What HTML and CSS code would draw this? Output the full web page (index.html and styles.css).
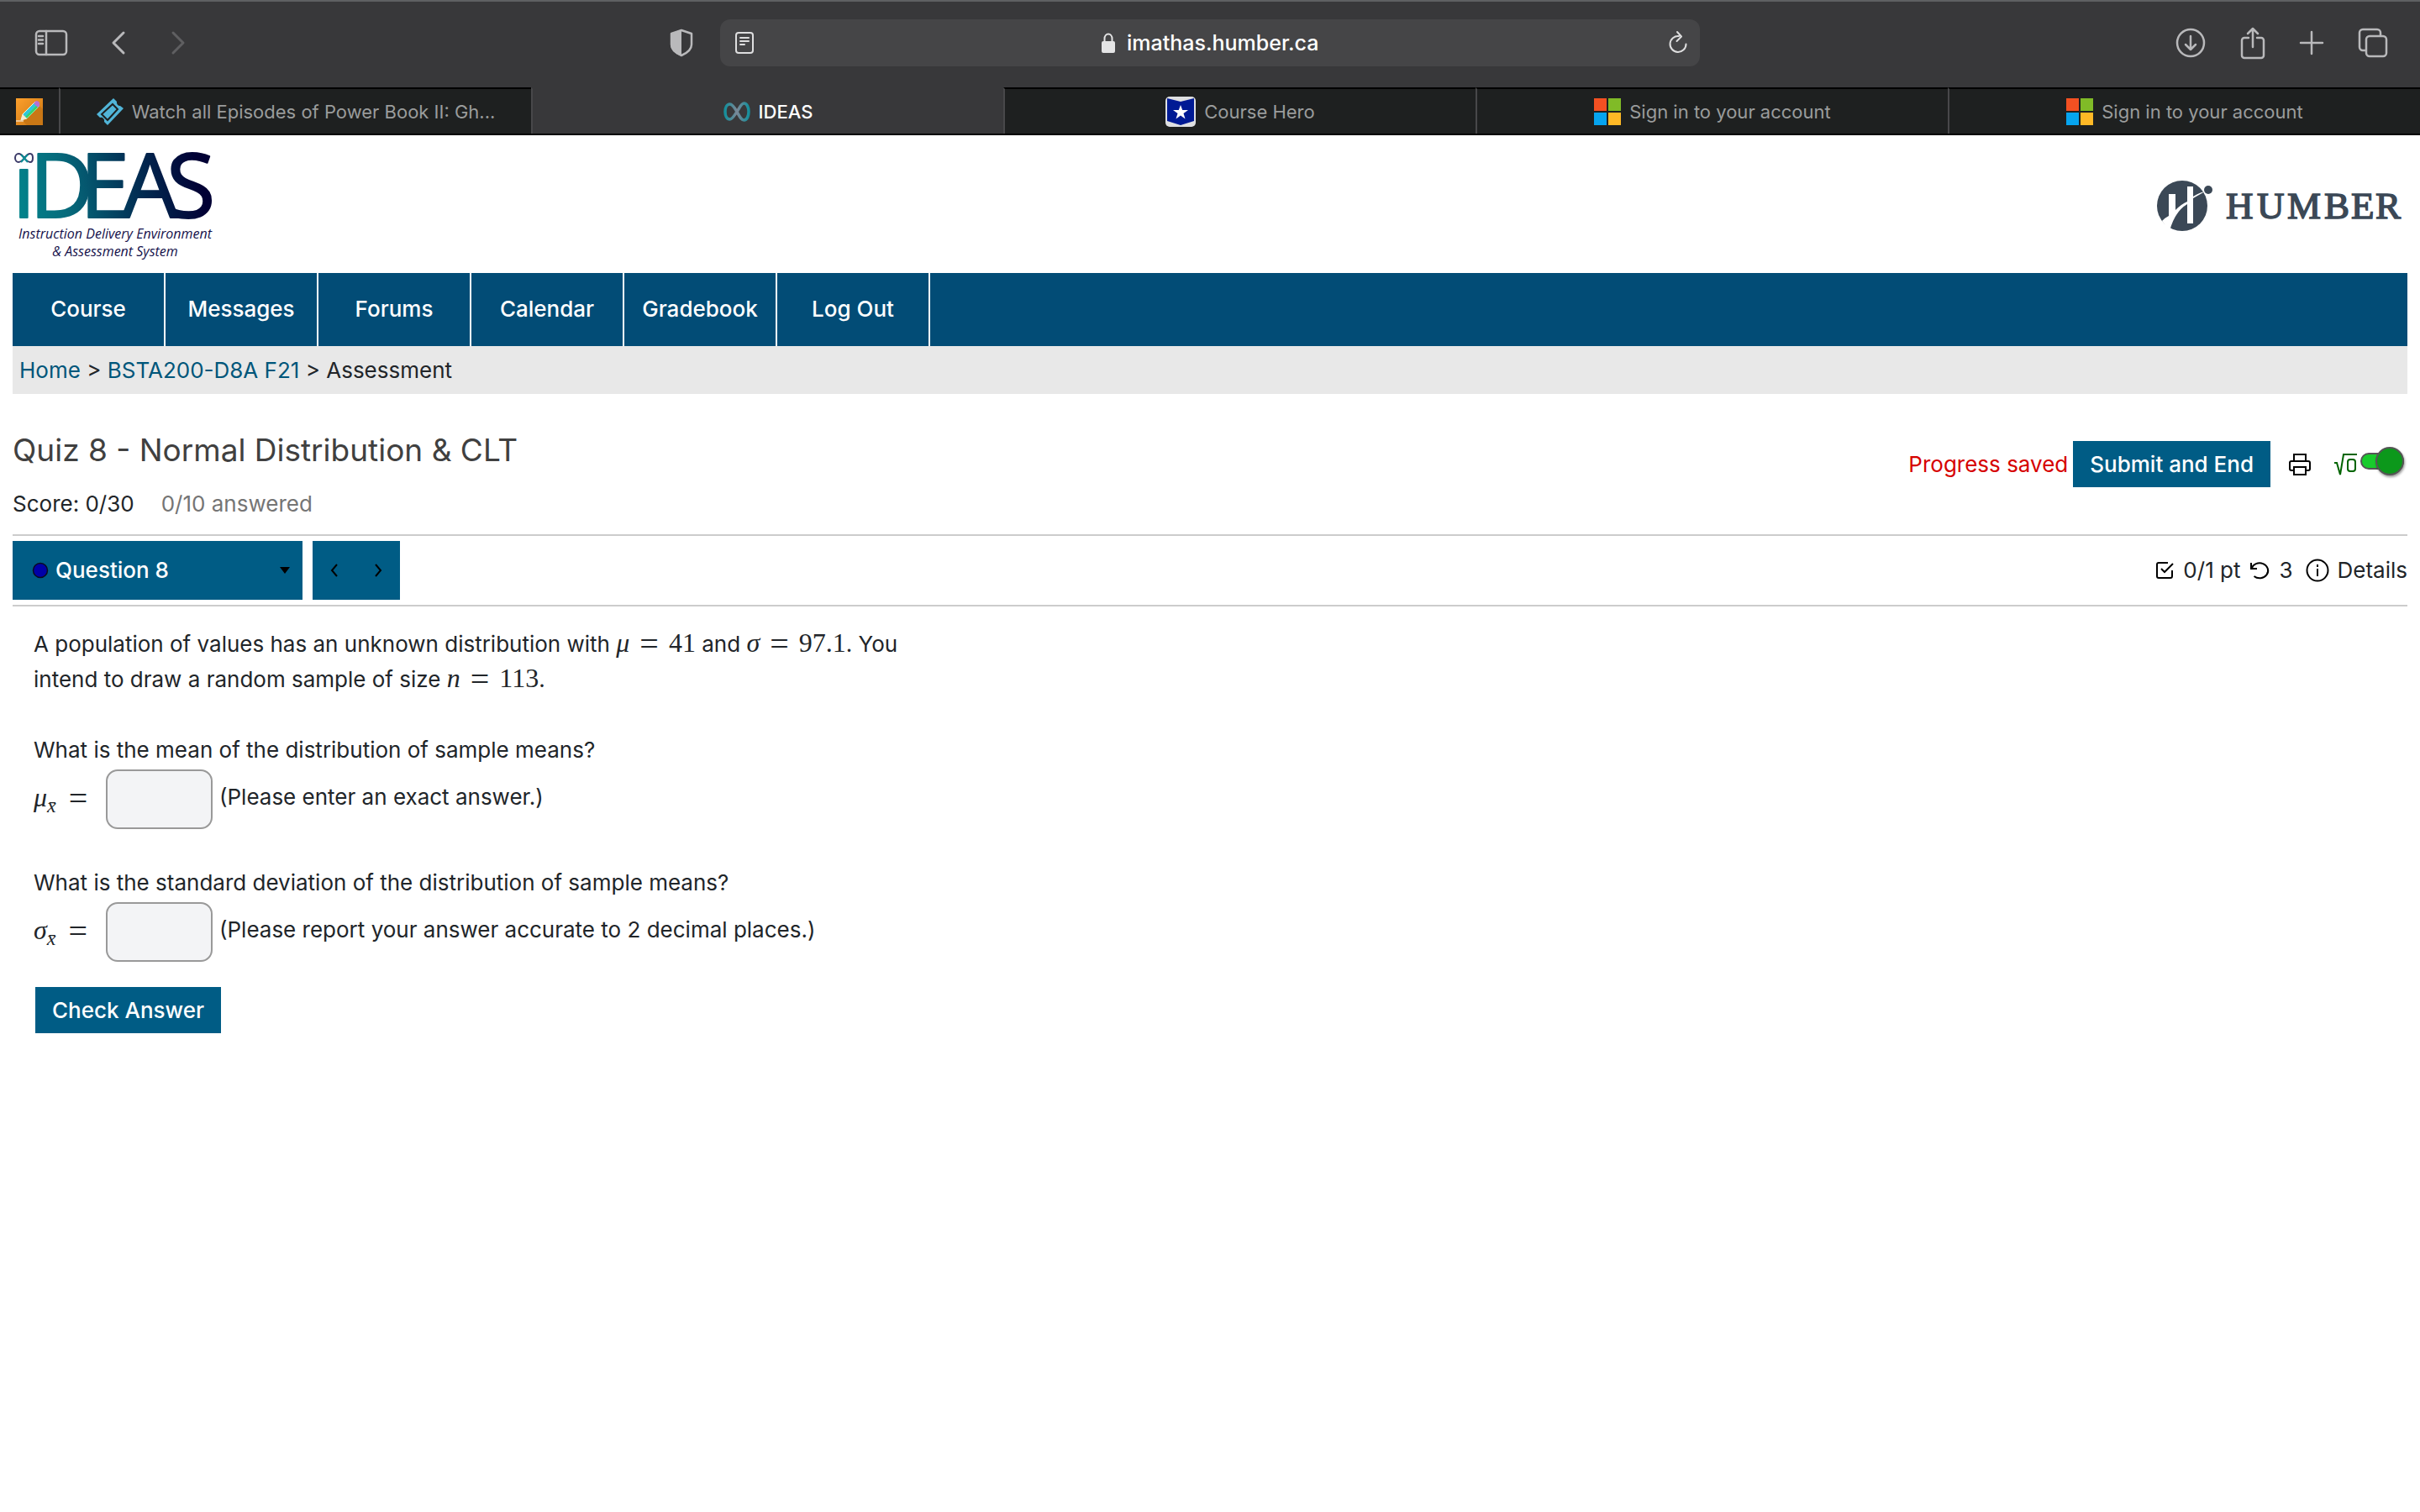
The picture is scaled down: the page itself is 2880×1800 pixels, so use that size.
FILE: index.html
```html
<!DOCTYPE html>
<html lang="en">
<head>
<meta charset="utf-8">
<title>IDEAS</title>
<link rel="stylesheet" href="styles.css">
</head>
<body>
<header class="browser">
  <div class="toolbar">
    <div class="tools tools-left">
      <button class="tool" aria-label="Show sidebar"><svg width="40" height="32" viewBox="0 0 40 32"><rect x="2" y="2" width="36" height="28" rx="4"/><path d="M14 2v28M5 8h5M5 12.500h5M5 17h5"/></svg></button>
      <button class="tool tool-back" aria-label="Back"><svg width="18" height="30" viewBox="0 0 18 30"><path d="M15 3 3 15l12 12" stroke-width="3"/></svg></button>
      <button class="tool tool-forward" aria-label="Forward"><svg width="18" height="30" viewBox="0 0 18 30"><path d="m3 3 12 12L3 27" stroke-width="3"/></svg></button>
      <button class="tool tool-shield" aria-label="Privacy report"><svg width="28" height="34" viewBox="0 0 28 34"><path d="M14 2 26 6v13c0 6-5 10-12 13C7 29 2 25 2 19V6z"/><path d="M14 1v32C6 30 1 25 1 19V6z" fill="currentColor" stroke="none"/></svg></button>
    </div>
    <form class="address">
      <button type="button" class="tool" aria-label="Reader"><svg width="22" height="26" viewBox="0 0 22 26"><rect x="1" y="1" width="20" height="24" rx="3"/><path d="M6 7h10M6 11h10M6 15h5"/></svg></button>
      <div class="site">
        <svg width="16" height="24" viewBox="0 0 16 24"><path d="M3.500 11V7a4.500 5.500 0 0 1 9 0v4" fill="none" stroke="#e4e4e5" stroke-width="2"/><rect y="10" width="16" height="14" rx="2" fill="#e4e4e5"/></svg>
        <input class="url" type="text" aria-label="Address" value="imathas.humber.ca">
      </div>
      <button type="button" class="tool" aria-label="Reload"><svg width="24" height="28" viewBox="0 0 24 28"><path d="M13 6a9.500 9.500 0 1 0 8.500 9.500M11 1l5 5.500-5.500 5.500"/></svg></button>
    </form>
    <div class="tools tools-right">
      <button class="tool" aria-label="Downloads"><svg width="36" height="36" viewBox="0 0 36 36"><circle cx="18" cy="18" r="16"/><path d="M18 10v16M12 20l6 6 6-6"/></svg></button>
      <button class="tool" aria-label="Share"><svg width="30" height="40" viewBox="0 0 30 40"><path d="M10 14H5a3 3 0 0 0-3 3v18a3 3 0 0 0 3 3h20a3 3 0 0 0 3-3V17a3 3 0 0 0-3-3h-5M15 25V3M9 9l6-6 6 6"/></svg></button>
      <button class="tool" aria-label="New tab"><svg width="28" height="28" viewBox="0 0 28 28"><path d="M14 1v26M1 14h26"/></svg></button>
      <button class="tool" aria-label="Show all tabs"><svg width="36" height="36" viewBox="0 0 36 36"><rect x="10" y="10" width="24" height="24" rx="4"/><path d="M9 27H6a4 4 0 0 1-4-4V6a4 4 0 0 1 4-4h17a4 4 0 0 1 4 4v3"/></svg></button>
    </div>
  </div>
  <nav class="tabs" aria-label="Tabs">
    <a class="tab tab-pinned" href="#" aria-label="Notes"><svg width="32" height="32" viewBox="0 0 32 32"><defs><linearGradient id="note" x2="1" y2="1"><stop stop-color="#fda02c"/><stop offset="1" stop-color="#c87413"/></linearGradient></defs><path fill="url(#note)" d="M0 0h32v32H0z"/><path d="M8 27 27 8l5 5v19H13z" fill="#c97715"/><path d="M0 27h9" stroke="#fff" stroke-width="1"/><path d="m6 26 2-7L23 4l5 5-15 15z" fill="#31c6d8" stroke="#e9f7e0"/><path d="m11 22 14-14 3 1-15 15z" fill="#38d26a"/><path d="m6 26 2-7 5 5z" fill="#fbe9cf"/><path d="m21 6 3-3q5 0 4 6l-2 2z" fill="#b76fd4"/></svg></a>
    <a class="tab" href="#"><svg width="32" height="32" viewBox="0 0 32 32"><path fill="#51b5d8" d="m20 0 4 4a4 4 0 0 0 4 5l4 3-19 20-4-4a4 4 0 0 0-5-5l-4-4z"/><path d="m19 7 6 6-12 13-7-7z" fill="none" stroke="#1e2020" stroke-width="2"/></svg><span>Watch all Episodes of Power Book II: Gh...</span></a>
    <a class="tab tab-active" href="#" aria-current="page"><svg width="32" height="24" viewBox="0 0 32 24"><defs><linearGradient id="loop"><stop stop-color="#158f9c"/><stop offset=".5" stop-color="#7b8796"/><stop offset="1" stop-color="#158f9c"/></linearGradient></defs><path d="M16 12C12 5 10 3 7.500 3 4 3 2 7 2 12s2 9 5.500 9c3 0 5-4 8.500-9s5-10 8.500-10C28 2 30 7 30 12s-2 10-5.500 10C21 22 19 17 16 12z" fill="none" stroke="url(#loop)" stroke-width="3.500"/></svg><span>IDEAS</span></a>
    <a class="tab" href="#"><svg width="36" height="36" viewBox="0 0 36 36"><rect width="36" height="36" rx="5" fill="#dfe0e2"/><path d="m2 2 16 4 16-4v27l-16 5-16-5z" fill="#001a94"/><path d="m18 10 2.200 6H27l-5.500 4 2 6.500-5.500-4-5.500 4 2-6.500L9 16h6.800z" fill="#fff"/></svg><span>Course Hero</span></a>
    <a class="tab" href="#"><svg width="32" height="32" viewBox="0 0 32 32"><path fill="#f35022" d="M0 0h15v15H0z"/><path fill="#80bb27" d="M17 0h15v15H17z"/><path fill="#06a4ef" d="M0 17h15v15H0z"/><path fill="#ffb926" d="M17 17h15v15H17z"/></svg><span>Sign in to your account</span></a>
    <a class="tab" href="#"><svg width="32" height="32" viewBox="0 0 32 32"><path fill="#f35022" d="M0 0h15v15H0z"/><path fill="#80bb27" d="M17 0h15v15H17z"/><path fill="#06a4ef" d="M0 17h15v15H0z"/><path fill="#ffb926" d="M17 17h15v15H17z"/></svg><span>Sign in to your account</span></a>
  </nav>
</header>

<div class="page">
  <header class="brand">
    <svg class="ideas" width="250" height="150" viewBox="0 0 250 150" role="img" aria-label="IDEAS">
      <defs><linearGradient id="ideas" gradientUnits="userSpaceOnUse" x1="10" y1="90" x2="225" y2="50"><stop stop-color="#02838b"/><stop offset=".25" stop-color="#066b7c"/><stop offset=".6" stop-color="#023558"/><stop offset="1" stop-color="#010034"/></linearGradient></defs>
      <text class="ideas-word" y="89" x="0 20 80 130 183" fill="url(#ideas)" stroke="url(#ideas)">ıDEAS</text>
      <path d="M14 18c-3-4-5-5-7-5s-4 2-4 5 2 5 4 5 4-1 7-5 5-5 7-5 3 2 3 5-1 5-3 5-4-1-7-5z" fill="none" stroke="#3b3a68" stroke-width="2"/><path d="m10 14 8 9M18 14l-8 9" stroke="#0c8c94" stroke-width="2"/>
      <text class="ideas-tag" x="122" y="114">Instruction Delivery Environment</text>
      <text class="ideas-tag" x="122" y="135">&amp; Assessment System</text>
    </svg>
    <svg class="humber" width="300" height="64" viewBox="0 0 300 64" role="img" aria-label="Humber">
      <circle cx="32" cy="32" r="30"/><circle cx="63" cy="13" r="5"/>
      <path d="M16 18h8v19q7-7 14-10V9h7v12q8-5 14-6l-14 8v30h-7V30Q23 39 17 62L8 50q4-4 8-6z" fill="#fff"/>
      <text y="47" x="84 121 157 201 233 262">HUMBER</text>
    </svg>
  </header>

  <nav class="menu" aria-label="Course">
    <a href="#">Course</a><a href="#">Messages</a><a href="#">Forums</a><a href="#">Calendar</a><a href="#">Gradebook</a><a href="#">Log Out</a>
  </nav>
  <nav class="crumbs" aria-label="Breadcrumb"><a href="#">Home</a> &gt; <a href="#">BSTA200-D8A F21</a> &gt; Assessment</nav>

  <main>
    <div class="heading">
      <div>
        <h1>Quiz 8 - Normal Distribution &amp; CLT</h1>
        <p class="score"><span>Score: 0/30</span><span class="answered">0/10 answered</span></p>
      </div>
      <div class="actions">
        <span class="saved" role="status">Progress saved</span>
        <button class="primary">Submit and End</button>
        <button class="icon-button" aria-label="Print"><svg width="28" height="28" viewBox="0 0 28 28"><path d="M7 10V2h14v8M7 21H4a2 2 0 0 1-2-2v-7a2 2 0 0 1 2-2h20a2 2 0 0 1 2 2v7a2 2 0 0 1-2 2h-3M7 17h14v9H7z"/></svg></button>
        <label class="math-toggle">
          <svg width="30" height="28" viewBox="0 0 30 28" role="img" aria-label="Equation editor"><path d="M1 12h3l4 14 4-24h16M20 8h3q3 0 3 3v8q0 3-3 3h-3q-3 0-3-3v-8q0-3 3-3z"/></svg>
          <input type="checkbox" role="switch" checked>
        </label>
      </div>
    </div>

    <div class="question-bar">
      <div class="picker">
        <select aria-label="Question"><option>Question 8</option></select>
        <svg class="picker-dot" width="20" height="20" viewBox="0 0 20 20"><circle cx="10" cy="10" r="8.500" fill="#0000a8" stroke="#0b0b20" stroke-width="1.500"/></svg>
        <svg class="picker-caret" width="12" height="8" viewBox="0 0 12 8"><path d="M0 0h12L6 8z"/></svg>
      </div>
      <div class="stepper">
        <button aria-label="Previous question"><svg width="10" height="16" viewBox="0 0 10 16"><path d="M8 1 2 8l6 7"/></svg></button>
        <button aria-label="Next question"><svg width="10" height="16" viewBox="0 0 10 16"><path d="m2 1 6 7-6 7"/></svg></button>
      </div>
      <div class="points">
        <svg width="22" height="22" viewBox="0 0 22 22"><path d="M15 2H4a2 2 0 0 0-2 2v14a2 2 0 0 0 2 2h14a2 2 0 0 0 2-2v-7M7 9l4 4 10-10"/></svg>
        <span>0/1 pt</span>
        <svg width="24" height="24" viewBox="0 0 24 24"><path d="M2 3v7h7M2.500 10a10 9 0 1 1 3 9"/></svg>
        <span class="tries">3</span>
        <button class="details"><svg width="28" height="28" viewBox="0 0 28 28"><circle cx="14" cy="14" r="12.500"/><path d="M14 12v9M14 7v3"/></svg>Details</button>
      </div>
    </div>

    <form class="question">
      <p>A population of values has an unknown distribution with <span class="math"><i>μ</i><b>=</b>41</span> and <span class="math"><i>σ</i><b>=</b>97.1</span>. You<br>intend to draw a random sample of size <span class="math"><i>n</i><b>=</b>113</span>.</p>
      <p>What is the mean of the distribution of sample means?</p>
      <div class="answer">
        <label class="math" for="mean"><i>μ</i><sub>x̄</sub><b>=</b></label>
        <input id="mean" type="text">
        <span class="hint">(Please enter an exact answer.)</span>
      </div>
      <p>What is the standard deviation of the distribution of sample means?</p>
      <div class="answer">
        <label class="math" for="deviation"><i>σ</i><sub>x̄</sub><b>=</b></label>
        <input id="deviation" type="text">
        <span class="hint">(Please report your answer accurate to 2 decimal places.)</span>
      </div>
      <button type="button" class="primary check">Check Answer</button>
    </form>
  </main>
</div>
</body>
</html>
```
FILE: styles.css
```css
* { box-sizing: border-box; }
body {
  margin: 0;
  background: #fff;
  color: #212529;
  font: 26px/42px Inter, "Liberation Sans", sans-serif;
}
button, input, select { font: inherit; color: inherit; margin: 0; border: 0; padding: 0; background: none; border-radius: 0; }
a { color: inherit; text-decoration: none; }
svg { display: block; flex: none; overflow: visible; }
h1, p { margin: 0; font-weight: 400; }

/* Browser window */
.toolbar {
  display: grid;
  grid-template-columns: 1fr minmax(0, 1166px) 1fr;
  align-items: center;
  height: 104px;
  padding-bottom: 4px;
  border-top: 2px solid #5e6062;
  background: #38383a;
}
.tool { color: #b9b9bb; }
.tool svg { fill: none; stroke: currentColor; stroke-width: 2.5; stroke-linecap: round; stroke-linejoin: round; }
.address .tool svg { stroke-width: 2; }
.tools { display: flex; align-items: center; }
.tools-left { padding: 0 32px 0 41px; }
.tool-back { margin-left: 51px; }
.tool-forward { margin-left: 53px; color: #5f5f61; }
.tool-shield { margin-left: auto; }
.tools-right { justify-content: flex-end; gap: 41px; padding-right: 38px; }
.address {
  display: flex;
  align-items: center;
  justify-content: space-between;
  height: 56px;
  padding: 0 14px 0 18px;
  border-radius: 12px;
  background: #454547;
}
.address .tool { color: #dededf; }
.site { display: flex; align-items: center; gap: 14px; }
.url { width: 230px; color: #fff; font-size: 25px; font-weight: 500; }
.tabs {
  display: flex;
  height: 57px;
  border-bottom: 2px solid #000;
  background: #1e2020;
}
.tab {
  display: flex;
  align-items: center;
  justify-content: center;
  flex: 1;
  gap: 10px;
  border-top: 2px solid #000;
  border-left: 2px solid #48484a;
  color: #9a9c9c;
  font-size: 22px;
}
.tab-pinned { flex: 0 0 70px; border-left: 0; }
.tab-active { border-top-color: #38383a; background: #38383a; color: #fff; font-weight: 500; }

/* Site header */
.page { padding: 0 15px; }
.brand { display: flex; justify-content: space-between; align-items: center; height: 164px; padding-top: 3px; }
.ideas-word { font: 106px "Open Sans", sans-serif; stroke-width: 2; stroke-linejoin: round; }
.ideas-tag { font: italic 16px "Open Sans", sans-serif; text-anchor: middle; fill: #14104a; }
.humber { fill: #3b4856; }
.humber text { font: 45px "Liberation Serif", serif; stroke: #3b4856; stroke-width: 1.5; }
.menu { display: flex; height: 87px; background: #024c76; color: #fff; font-weight: 500; }
.menu a { display: grid; place-items: center; width: 182px; padding-bottom: 2px; border-right: 2px solid #fff; }
.crumbs { padding: 8px 8px 7px; background: #e8e8e8; }
.crumbs a { color: #00567a; }

/* Quiz heading */
.heading { display: flex; justify-content: space-between; padding: 43px 0 15px; border-bottom: 2px solid #ccc; }
h1 { font-size: 37px; line-height: 48px; color: #404040; }
.score { display: flex; gap: 32px; padding-top: 19px; }
.answered { color: #757575; }
.actions { display: flex; align-items: center; align-self: flex-start; padding-top: 13px; }
.saved { margin-right: 6px; color: #d60000; }
.primary { height: 55px; padding: 0 20px; background: #005c85; color: #fff; font-weight: 500; }
.icon-button { margin: 0 26px 0 21px; }
.icon-button svg, .points svg { fill: none; stroke: #000; stroke-width: 2; }
.math-toggle { display: flex; align-items: center; gap: 2px; padding-right: 4px; }
.math-toggle svg { fill: none; stroke: #006400; stroke-width: 2; }
.math-toggle input {
  display: flex;
  align-items: center;
  justify-content: flex-end;
  appearance: none;
  width: 52px;
  height: 20px;
  margin-bottom: 8px;
  border: 2px solid #555;
  border-radius: 10px;
  background: #18cb2c;
}
.math-toggle input::before {
  content: "";
  flex: none;
  width: 30px;
  height: 30px;
  margin-right: -2px;
  border: 2px solid #555;
  border-radius: 50%;
  background: #0c981b;
  box-shadow: 1px 2px 3px #0006;
}

/* Question selector */
.question-bar { display: flex; align-items: center; gap: 12px; padding: 6px 0; border-bottom: 2px solid #ccc; }
.picker { display: grid; align-items: center; width: 345px; }
.picker > * { grid-area: 1 / 1; }
.picker select { appearance: none; height: 70px; padding-left: 51px; background: #005c85; color: #fff; font-weight: 500; }
.picker-dot { margin-left: 23px; }
.picker-caret { justify-self: end; margin-right: 15px; }
.stepper { display: flex; height: 70px; background: #005c85; }
.stepper button { display: grid; place-items: center; width: 52px; }
.stepper svg { fill: none; stroke: #000; stroke-width: 2; }
.points { display: flex; align-items: center; gap: 11px; margin-left: auto; }
.tries { margin-right: 4px; }
.details { display: flex; align-items: center; gap: 10px; }

/* Question */
.question { padding: 24px 25px; }
.question p + p, .answer + p { margin-top: 42px; }
.math { font: 32px/30px "Liberation Serif", serif; white-space: nowrap; }
.math b { margin: 0 12px; font-size: 40px; font-weight: 400; line-height: 20px; vertical-align: -4px; }
.math sub { font-size: 24px; font-style: italic; line-height: 20px; }
.answer { display: flex; align-items: center; gap: 8px; padding: 2px 0 1px; }
.answer label { width: 78px; }
.answer b { margin-left: 15px; }
.answer input { width: 127px; height: 71px; padding: 0 12px; border: 2px solid #999; border-radius: 14px; background: #f3f4f6; }
.hint { padding-bottom: 6px; }
.check { margin: 29px 2px; }
```
